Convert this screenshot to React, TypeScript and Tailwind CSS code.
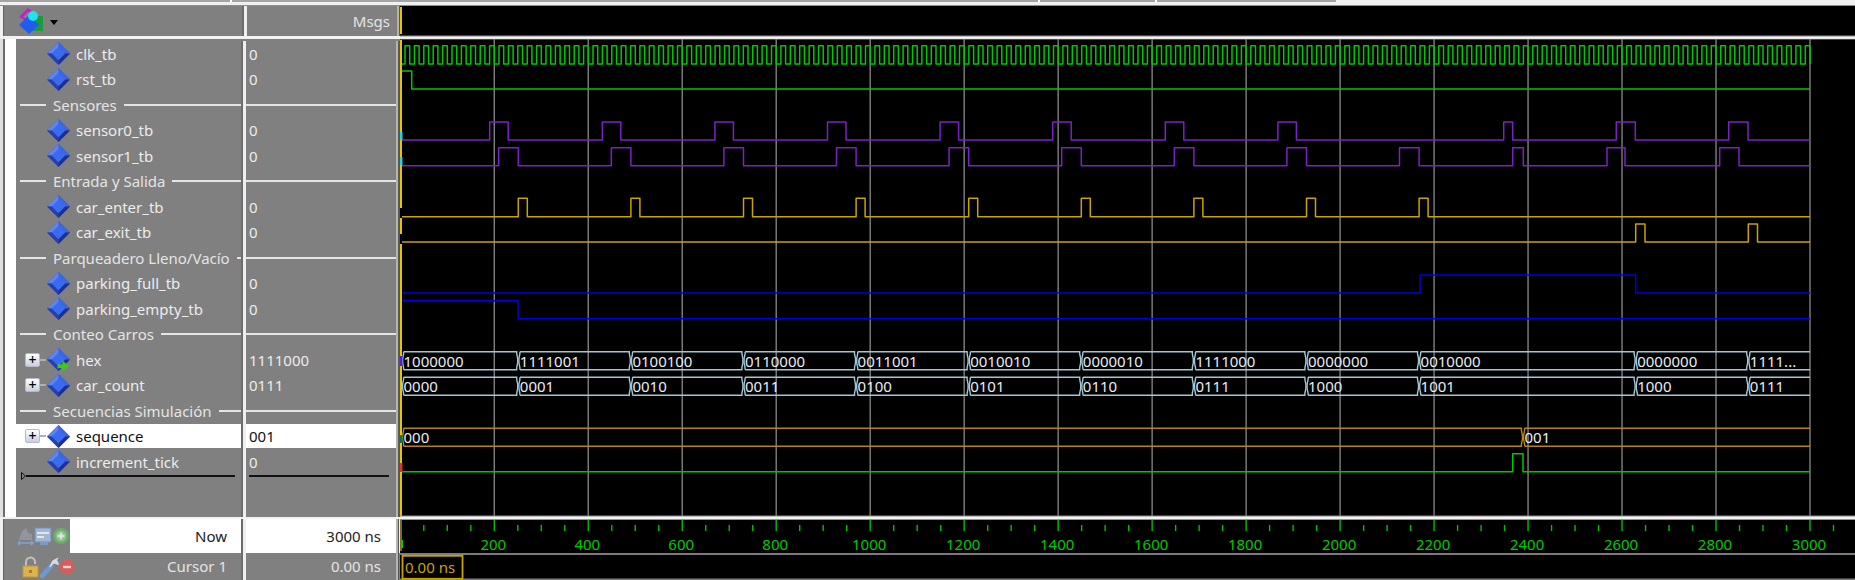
import React from 'react';

type Sig = { name: string; value: string; plus?: boolean; arrow?: boolean; selected?: boolean };
type Item = Sig | { divider: string };

const items: Item[] = [
  { name: 'clk_tb', value: '0' },
  { name: 'rst_tb', value: '0' },
  { divider: 'Sensores' },
  { name: 'sensor0_tb', value: '0' },
  { name: 'sensor1_tb', value: '0' },
  { divider: 'Entrada y Salida' },
  { name: 'car_enter_tb', value: '0' },
  { name: 'car_exit_tb', value: '0' },
  { divider: 'Parqueadero Lleno/Vacío' },
  { name: 'parking_full_tb', value: '0' },
  { name: 'parking_empty_tb', value: '0' },
  { divider: 'Conteo Carros' },
  { name: 'hex', value: '1111000', plus: true, arrow: true },
  { name: 'car_count', value: '0111', plus: true },
  { divider: 'Secuencias Simulación' },
  { name: 'sequence', value: '001', plus: true, selected: true },
  { name: 'increment_tick', value: '0' },
];

const END = 1810;
const tx = (t: number) => 400.3 + t * 0.4699;
const STEP = 112.6;

// low-high-low pulses, edges in pixels
function pulses(low: number, high: number, edges: number[][]) {
  let d = `M402 ${low}`;
  edges.forEach(([r, f]) => {
    d += ` H${r} V${high} H${f} V${low}`;
  });
  return d + ` H${END}`;
}

function clockPath() {
  let d = 'M402 64';
  for (let k = 0; k < 150; k++) {
    d += ` H${tx(10 + 20 * k).toFixed(1)} V45.7 H${Math.min(tx(20 + 20 * k), END).toFixed(1)} V64`;
  }
  return d;
}

const sensor0 = [
  ...Array.from({ length: 8 }, (_, k) => [489.7 + STEP * k, 508.2 + STEP * k]),
  [1503.7, 1512.7],
  [1616.3, 1635.3],
  [1728.7, 1748],
];
const sensor1 = [
  ...Array.from({ length: 9 }, (_, k) => [498.7 + STEP * k, 518.3 + STEP * k]),
  [1512.7, 1523.3],
  [1607, 1625],
  [1719.7, 1739],
];
const carEnter = Array.from({ length: 9 }, (_, k) => [518.3 + STEP * k, 527.3 + STEP * k]);

const busStarts = [402, ...Array.from({ length: 9 }, (_, k) => 518.3 + STEP * k), 1635.7, 1748.3];

const hexValues = ['1000000', '1111001', '0100100', '0110000', '0011001', '0010010', '0000010', '1111000', '0000000', '0010000', '0000000', '1111...'];
const countValues = ['0000', '0001', '0010', '0011', '0100', '0101', '0110', '0111', '1000', '1001', '1000', '0111'];

const Bus = ({ top, starts, values, color }: { top: number; starts: number[]; values: string[]; color: string }) => {
  const bottom = top + 18;
  const mid = top + 9;
  return (
    <g>
      {starts.map((a, i) => {
        const open = i + 1 === starts.length;
        const b = open ? END : starts[i + 1];
        const l = a + 1.6;
        const r = b - 1.6;
        const left = `M${l} ${top} V${top + 2} L${a + 0.6} ${mid - 2} V${mid + 2} L${l} ${bottom - 2} V${bottom}`;
        const right = open
          ? `M${l} ${top} H${END} M${l} ${bottom} H${END}`
          : `M${l} ${top} H${r} V${top + 2} L${b - 0.6} ${mid - 2} V${mid + 2} L${r} ${bottom - 2} V${bottom} H${l}`;
        return (
          <g key={i}>
            <path d={`${left} ${right}`} fill="none" stroke={color} strokeWidth={1.4} />
            <text x={a + 1.5} y={mid + 6} fill="#e8eef2" fontSize={15}>
              {values[i]}
            </text>
          </g>
        );
      })}
    </g>
  );
};

const Diamond = ({ arrow }: { arrow?: boolean }) => (
  <svg width="23" height="23" viewBox="0 0 24 24" className="shrink-0">
    <polygon points="12,0 24,12 12,24 0,12" fill="#2f4fc8" />
    <polygon points="12,0 24,12 18,12 12,6" fill="#3d66e0" />
    <polygon points="12,0 12,6 6,12 0,12" fill="#5f86ee" />
    <polygon points="0,12 6,12 12,18 12,24" fill="#2a3ea8" />
    <polygon points="24,12 18,12 12,18 12,24" fill="#1f2f90" />
    <polygon points="12,5 19,12 12,19 5,12" fill="#3a6cf2" />
    {arrow && <polygon points="11,17 16,17 16,13 23,19 16,24 16,21 11,21" fill="#3fc81e" />}
  </svg>
);

const PlusBox = () => (
  <div className="flex items-center shrink-0">
    <div className="w-[15px] h-[14px] flex items-center justify-center bg-gradient-to-b from-white to-[#c8d0e0] border border-[#b8b8c8] rounded-[2px] text-black text-[14px] leading-none font-medium">
      +
    </div>
    <div className="w-[6px] h-[2px] bg-[#b0b0b0]" />
  </div>
);

const NAME_W = 'w-[225px]';

const Seps = ({ children, value, className = '' }: { children: React.ReactNode; value: React.ReactNode; className?: string }) => (
  <div className={`flex ${className}`}>
    <div className={`${NAME_W} shrink-0 min-w-0`}>{children}</div>
    <div className="w-[2px] bg-[#6c6c6c]" />
    <div className="w-[3px] bg-[#efefef]" />
    <div className="w-[150px] shrink-0">{value}</div>
    <div className="w-[2px] bg-[#b4b4b4]" />
    <div className="w-[2px] bg-[#585858]" />
  </div>
);

const SignalRow = ({ s }: { s: Sig }) => {
  const cell = s.selected ? 'bg-white text-[#111]' : 'text-[#ececec]';
  return (
    <Seps
      className="h-[25.5px]"
      value={
        <div className={`h-[24px] mt-[0.8px] pl-[3px] flex items-center text-[15px] ${cell}`}>{s.value}</div>
      }
    >
      <div className={`h-[24px] mt-[0.8px] flex items-center text-[15px] ${cell}`}>
        <div className="w-[30.5px] pl-[9px] shrink-0 flex">{s.plus && <PlusBox />}</div>
        <Diamond arrow={s.arrow} />
        <span className="ml-[6.5px] whitespace-nowrap">{s.name}</span>
      </div>
    </Seps>
  );
};

const DividerRow = ({ label }: { label: string }) => (
  <Seps
    className="h-[25.5px]"
    value={
      <div className="h-full flex items-center">
        <div className="h-[2px] w-full bg-[#e4e4e4]" />
      </div>
    }
  >
    <div className="h-full flex items-center pl-[4px] text-[15px] text-[#e4e4e4]">
      <div className="h-[2px] w-[26px] bg-[#e4e4e4] shrink-0" />
      <span className="mx-[7px] whitespace-nowrap">{label}</span>
      <div className="h-[2px] flex-1 min-w-[2px] bg-[#e4e4e4]" />
    </div>
  </Seps>
);

const HeaderIcon = () => (
  <svg width="26" height="26" viewBox="0 0 26 26" className="shrink-0">
    <polygon points="1,9 10,0 19,7 10,14" fill="#c020c8" />
    <polygon points="5,9 10,4 15,8 10,11" fill="#808080" />
    <rect x="10" y="8" width="15" height="15" fill="#1c9a3c" />
    <polygon points="1,17 11,7 21,17 11,26" fill="#1f5cf0" />
    <circle cx="15" cy="8" r="5" fill="#22e0f0" />
  </svg>
);

const NowIcons = () => (
  <svg width="52" height="22" viewBox="0 0 52 22" className="shrink-0 opacity-80">
    <path d="M1 15 L4 6 L8 3 L10 8 L14 9 L14 15 Z" fill="#9a9aa8" />
    <path d="M0 18 H15 M2 16 L0 18 L2 20 M13 16 L15 18 L13 20" stroke="#7ab0e8" strokeWidth="1.5" fill="none" />
    <rect x="17" y="3" width="16" height="14" fill="#a8c4e8" stroke="#6f94c8" />
    <rect x="19" y="7" width="12" height="2" fill="#fff" />
    <rect x="19" y="11" width="7" height="2" fill="#fff" />
    <rect x="22" y="17" width="8" height="3" fill="#7ca2d4" />
    <circle cx="43" cy="11" r="8" fill="#66b866" />
    <circle cx="43" cy="11" r="5.5" fill="#8ad08a" />
    <path d="M43 7.5 V14.5 M39.5 11 H46.5" stroke="#f0fff0" strokeWidth="2.4" />
  </svg>
);

const CursorIcons = () => (
  <svg width="54" height="22" viewBox="0 0 54 22" className="shrink-0 opacity-90">
    <path d="M4 10 V6 A4.5 4.5 0 0 1 13 6 V8" stroke="#c8c8c8" strokeWidth="2" fill="none" />
    <rect x="1" y="10" width="15" height="11" fill="#e8b84c" stroke="#c89a30" />
    <rect x="7" y="14" width="3" height="3" fill="#b07c1c" />
    <path d="M20 20 L29 10" stroke="#6a9ce0" strokeWidth="4.5" strokeLinecap="round" />
    <path d="M28 11 L31 5 L35 3 L33 7 L36 8 L35 5" fill="#dfe6f2" stroke="#dfe6f2" strokeWidth="1.5" />
    <circle cx="45" cy="11" r="7.5" fill="#e05a5a" />
    <rect x="41" y="9.8" width="8" height="2.4" fill="#ffe4e4" />
  </svg>
);

const WavePane = () => {
  const grid = Array.from({ length: 15 }, (_, i) => (i + 1) * 200);
  const minors = Array.from({ length: 62 }, (_, i) => i * 50).filter((t) => t % 200 !== 0 && t > 0);
  return (
    <svg
      viewBox="400 6 1455 574"
      width="1455"
      height="574"
      className="shrink-0 bg-black block"
      style={{ fontFamily: '"Noto Sans", sans-serif' }}
    >
      <rect x="400" y="35.5" width="1455" height="4" fill="#8a8a8a" />
      <rect x="400" y="36.5" width="1455" height="2.4" fill="#f2f2f2" />

      {grid.map((t) => (
        <line key={t} x1={tx(t)} x2={tx(t)} y1={39} y2={516} stroke="#808080" strokeWidth={1.4} />
      ))}

      <g fill="none" strokeWidth={1.5} strokeLinejoin="round">
        <path d={clockPath()} stroke="#00c800" />
        <path d={`M402 71 H411.7 V89 H${END}`} stroke="#00c800" />
        <path d={pulses(140, 122, sensor0)} stroke="#7a22c4" />
        <path d={pulses(165.7, 147.7, sensor1)} stroke="#7a22c4" />
        <path d={pulses(216.7, 198.3, carEnter)} stroke="#c8a400" />
        <path d={pulses(242, 224, [[1635.7, 1645], [1748.3, 1757.5]])} stroke="#c8a400" />
        <path d={pulses(293, 275, [[1420, 1635.7]])} stroke="#0000dc" />
        <path d={`M402 300.7 H518 V318.7 H${END}`} stroke="#0000dc" />
        <path d={pulses(471.7, 453.7, [[1512.7, 1523]])} stroke="#00c800" />
      </g>

      <Bus top={351.7} starts={busStarts} values={hexValues} color="#a0c8d4" />
      <Bus top={377.3} starts={busStarts} values={countValues} color="#a0c8d4" />
      <Bus top={428.3} starts={[402, 1523]} values={['000', '001']} color="#b8860b" />

      {/* cursor line and the little edge marks beside it */}
      <path d="M401 7 V34 M401 40 V208 M401 218 V234 M401 244 V516" stroke="#e8c400" strokeWidth={2} />
      <rect x="400" y="132" width="2.5" height="8" fill="#30d0d8" />
      <rect x="400" y="157" width="2.5" height="8" fill="#30d0d8" />
      <rect x="400" y="356" width="2.5" height="10" fill="#5020d0" />
      <rect x="400" y="435" width="2.5" height="8" fill="#107050" />
      <rect x="400" y="463" width="2.5" height="9" fill="#e03030" />

      <rect x="400" y="515.5" width="1455" height="4.5" fill="#8a8a8a" />
      <rect x="400" y="516.5" width="1455" height="2.6" fill="#f2f2f2" />
      <path d="M401 520 V551" stroke="#a89020" strokeWidth={1.5} />
      <rect x="401" y="540" width="2" height="8" fill="#00d000" />

      {minors.map((t) => (
        <line key={t} x1={tx(t)} x2={tx(t)} y1={525} y2={531} stroke="#00c000" strokeWidth={1.4} />
      ))}
      {grid.map((t) => (
        <g key={t}>
          <line x1={tx(t)} x2={tx(t)} y1={520} y2={531} stroke="#00c000" strokeWidth={1.4} />
          <text x={tx(t) - 1} y={549.5} textAnchor="middle" fill="#00c800" fontSize={15}>
            {t}
          </text>
        </g>
      ))}

      <rect x="400" y="553" width="1455" height="2" fill="#7c7c7c" />
      <rect x="400" y="578.5" width="1455" height="1.5" fill="#7c7c7c" />
      <rect x="402.5" y="555.8" width="60" height="23" fill="none" stroke="#c8a400" strokeWidth={1.8} />
      <text x="405" y="573" fill="#c8a400" fontSize={15}>
        0.00 ns
      </text>
    </svg>
  );
};

export default function App() {
  return (
    <div className="w-[1855px] h-[580px] overflow-hidden flex flex-col bg-[#f0f0f0] font-['Noto_Sans',sans-serif]">
      <div className="h-[6px] shrink-0 border-b border-[#8c8c8c]">
        <div className="flex h-[2px] w-[1336px] bg-[#a4a4a4]">
          <div className="w-[232px] border-r-2 border-white" />
          <div className="w-[808px] border-r-2 border-white" />
          <div className="w-[117px] border-r-2 border-white" />
        </div>
      </div>
      <div className="flex flex-1 min-h-0">
        <div className="w-[400px] shrink-0 flex flex-col">
          {/* header */}
          <div className="h-[30px] ml-[3px] flex border-l border-[#606060] bg-[#808080] shrink-0">
            <div className="w-[239px] pl-[14px] flex items-center gap-[6px]">
              <HeaderIcon />
              <div className="w-0 h-0 border-l-[4px] border-r-[4px] border-t-[5px] border-l-transparent border-r-transparent border-t-black mt-[2px]" />
            </div>
            <div className="w-[5px] bg-[#efefef] border-l-2 border-[#6c6c6c]" />
            <div className="w-[150px] text-right pr-[7px] text-[15px] leading-[30px] text-[#e4e4e4]">Msgs</div>
            <div className="w-[2px] bg-[#b4b4b4]" />
            <div className="w-[1px] bg-[#585858]" />
          </div>
          <div className="h-[3px] ml-[3px] bg-[#f2f2f2] shrink-0" />

          {/* signal list */}
          <div className="flex flex-1 min-h-0">
            <div className="w-[3px] bg-[#e0e0e0]" />
            <div className="w-[2px] bg-[#6c6c6c]" />
            <div className="w-[11px] bg-white" />
            <div className="flex-1 flex flex-col bg-[#808080] pt-[2px]">
              {items.map((it, i) =>
                'divider' in it ? <DividerRow key={i} label={it.divider} /> : <SignalRow key={i} s={it} />
              )}
              <Seps
                className="flex-1"
                value={<div className="h-[2px] mt-[0.5px] ml-[3px] mr-[7px] bg-[#111]" />}
              >
                <div className="flex items-center pl-[5px] -mt-[3px]">
                  <svg width="5" height="8" viewBox="0 0 5 8" className="shrink-0">
                    <polygon points="0.5,0.5 4.5,4 0.5,7.5" fill="none" stroke="#111" />
                  </svg>
                  <div className="h-[2px] w-[209px] bg-[#111]" />
                </div>
              </Seps>
            </div>
          </div>

          {/* now / cursor */}
          <div className="h-[2px] ml-[3px] bg-[#f2f2f2] shrink-0" />
          <div className="flex h-[34px] ml-[3px] shrink-0 text-[15px] text-[#222] border-l border-[#606060]">
            <div className="w-[66px] bg-[#808080] pl-[14px] flex items-center">
              <NowIcons />
            </div>
            <div className="w-[171px] bg-white flex items-center justify-end pr-[14px]">Now</div>
            <div className="w-[2px] bg-[#6c6c6c]" />
            <div className="w-[3px] bg-[#efefef]" />
            <div className="w-[150px] bg-white flex items-center justify-end pr-[15px]">3000 ns</div>
            <div className="w-[2px] bg-[#b4b4b4]" />
            <div className="w-[1px] bg-[#585858]" />
          </div>
          <div className="flex h-[27px] ml-[3px] shrink-0 text-[15px] text-[#e4e4e4] border-l border-[#606060] bg-[#808080]">
            <div className="w-[237px] pl-[18px] flex items-center">
              <CursorIcons />
              <span className="ml-auto mr-[14px]">Cursor 1</span>
            </div>
            <div className="w-[2px] bg-[#6c6c6c]" />
            <div className="w-[3px] bg-[#efefef]" />
            <div className="w-[150px] flex items-center justify-end pr-[15px]">0.00 ns</div>
            <div className="w-[2px] bg-[#b4b4b4]" />
            <div className="w-[1px] bg-[#585858]" />
          </div>
        </div>
        <WavePane />
      </div>
    </div>
  );
}
